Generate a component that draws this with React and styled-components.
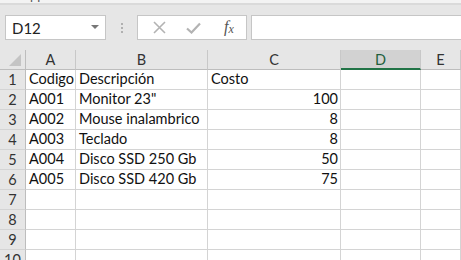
import React from "react";
import styled, { createGlobalStyle } from "styled-components";

const GlobalStyle = createGlobalStyle`
  html, body {
    margin: 0;
    padding: 0;
    background: #e6e6e6;
  }
  body {
    font-family: "Lato", "Liberation Sans", sans-serif;
  }
`;

const cols = ["A", "B", "C", "D", "E"];

const rows = [
  ["Codigo", "Descripción", "Costo"],
  ["A001", 'Monitor 23"', 100],
  ["A002", "Mouse inalambrico", 8],
  ["A003", "Teclado", 8],
  ["A004", "Disco SSD 250 Gb", 50],
  ["A005", "Disco SSD 420 Gb", 75],
  [],
  [],
  [],
  [],
];

function App() {
  return (
    <Container>
      <GlobalStyle />
      <TopStrip>
        <Crumb>pp</Crumb>
      </TopStrip>
      <FormulaBar>
        <NameBox>
          <span>D12</span>
          <Caret />
        </NameBox>
        <Grip>
          <i />
          <i />
          <i />
        </Grip>
        <FxButtons>
          <svg width="13" height="13" viewBox="0 0 13 13">
            <path d="M1 1 L12 12 M12 1 L1 12" stroke="#b3b3b3" strokeWidth="1.6" fill="none" />
          </svg>
          <svg width="15" height="12" viewBox="0 0 15 12">
            <path d="M1 6.5 L5.5 10.5 L14 1.5" stroke="#b3b3b3" strokeWidth="2.2" fill="none" />
          </svg>
          <FxLabel>
            f<sub>x</sub>
          </FxLabel>
        </FxButtons>
        <FormulaInput />
      </FormulaBar>
      <Sheet>
        <Corner>
          <span />
        </Corner>
        {cols.map((c) => (
          <ColHead key={c} $active={c === "D"}>
            {c}
          </ColHead>
        ))}
        {rows.map((r, i) => (
          <React.Fragment key={i}>
            <RowHead>{i + 1}</RowHead>
            {cols.map((c, j) => {
              const v = r[j];
              return (
                <Cell key={c} $num={typeof v === "number"}>
                  {v}
                </Cell>
              );
            })}
          </React.Fragment>
        ))}
      </Sheet>
    </Container>
  );
}

const Container = styled.div`
  width: 461px;
  height: 260px;
  overflow: hidden;
  background: #e6e6e6;
  display: flex;
  flex-direction: column;
`;

const TopStrip = styled.div`
  flex-shrink: 0;
  height: 3px;
  background: #f3f3f3;
  border-bottom: 2px solid #dadada;
  position: relative;
  overflow: hidden;
`;

const Crumb = styled.span`
  position: absolute;
  left: 30px;
  top: -12px;
  font-size: 13px;
  line-height: 15px;
  color: #555;
`;

const FormulaBar = styled.div`
  flex-shrink: 0;
  display: flex;
  align-items: stretch;
  height: 25px;
  padding: 10px 0 10px 5px;
`;

const NameBox = styled.div`
  width: 101px;
  background: #fff;
  border: 1px solid #c6c6c6;
  display: flex;
  align-items: center;
  justify-content: space-between;
  padding: 0 6px 0 6px;
  box-sizing: border-box;
  font-size: 15px;
  color: #222;
`;

const Caret = styled.i`
  width: 0;
  height: 0;
  border-left: 4px solid transparent;
  border-right: 4px solid transparent;
  border-top: 4px solid #777;
  margin-top: -2px;
`;

const Grip = styled.div`
  width: 31px;
  display: flex;
  flex-direction: column;
  align-items: center;
  justify-content: center;
  gap: 2px;
  i {
    width: 2px;
    height: 2px;
    background: #b0b0b0;
  }
`;

const FxButtons = styled.div`
  width: 110px;
  background: #fff;
  border: 1px solid #c6c6c6;
  box-sizing: border-box;
  display: flex;
  align-items: center;
  padding: 0 0 0 15px;
  gap: 20px;
`;

const FxLabel = styled.span`
  font-family: "Liberation Serif", serif;
  font-style: italic;
  font-size: 16px;
  color: #555;
  margin-left: 3px;
  sub {
    font-size: 12px;
    vertical-align: -1px;
  }
`;

const FormulaInput = styled.div`
  flex: 1;
  margin-left: 4px;
  background: #fff;
  border: 1px solid #c6c6c6;
  border-right: none;
`;

const Sheet = styled.div`
  flex: 1;
  min-height: 0;
  overflow: hidden;
  display: grid;
  grid-template-columns: 26px 50px 132px 133px 80px 1fr;
  grid-auto-rows: 20px;
  background: #fff;
  font-size: 14.5px;
  color: #111;
`;

const Corner = styled.div`
  background: #e6e6e6;
  border-right: 1px solid #bdbdbd;
  border-bottom: 1px solid #bdbdbd;
  position: relative;
  span {
    position: absolute;
    right: 4px;
    bottom: 3px;
    width: 0;
    height: 0;
    border-left: 12px solid transparent;
    border-bottom: 12px solid #c4c4c4;
  }
`;

const ColHead = styled.div`
  background: ${(p) => (p.$active ? "#d2d2d2" : "#e6e6e6")};
  border-right: 1px solid #c8c8c8;
  border-bottom: ${(p) => (p.$active ? "2px solid #217346" : "1px solid #bdbdbd")};
  display: flex;
  align-items: center;
  justify-content: center;
  font-size: 14.5px;
  color: ${(p) => (p.$active ? "#1f5f3c" : "#333")};
  box-sizing: border-box;
`;

const RowHead = styled.div`
  background: #e6e6e6;
  border-right: 1px solid #bdbdbd;
  border-bottom: 1px solid #d4d4d4;
  display: flex;
  align-items: center;
  justify-content: center;
  font-size: 14.5px;
  color: #333;
`;

const Cell = styled.div`
  border-right: 1px solid #d4d4d4;
  border-bottom: 1px solid #d4d4d4;
  display: flex;
  align-items: center;
  justify-content: ${(p) => (p.$num ? "flex-end" : "flex-start")};
  padding: 0 2px 0 3px;
  white-space: nowrap;
  overflow: visible;
  line-height: 1;
`;

export default App;
